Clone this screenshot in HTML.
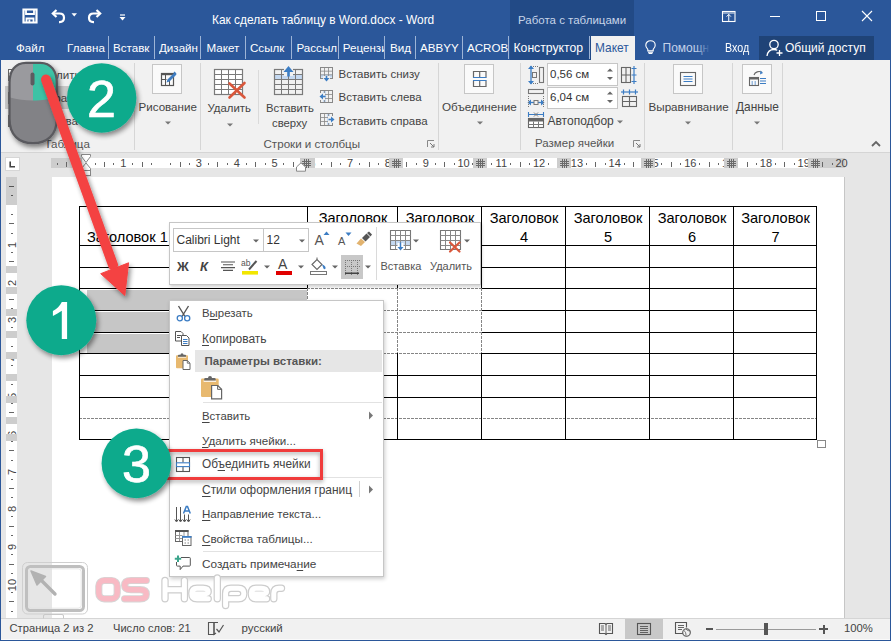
<!DOCTYPE html>
<html><head><meta charset="utf-8">
<style>
*{margin:0;padding:0;box-sizing:border-box}
html,body{width:891px;height:641px;overflow:hidden}
body{position:relative;background:#2B579A;font-family:"Liberation Sans",sans-serif;font-size:12px;color:#444}
.a{position:absolute}
.w{color:#fff}
.t{white-space:nowrap;line-height:1}
svg{position:absolute;overflow:visible}
</style></head><body>

<!-- ===== TITLE BAR ===== -->
<div class="a" style="left:510px;top:0;width:124px;height:60px;background:#224A86"></div>
<div class="a t w" style="left:212px;top:14.5px;font-size:11.9px">Как сделать таблицу в Word.docx - Word</div>
<div class="a t" style="left:518px;top:15px;font-size:11.5px;color:#C6D4E8">Работа с таблицами</div>

<!-- QAT -->
<svg style="left:22px;top:8px" width="16" height="16" viewBox="0 0 16 16"><path d="M1.5 1.5h13v13h-13z" fill="none" stroke="#fff" stroke-width="2.2"/><path d="M4 1.5v4.5h8V1.5" fill="none" stroke="#fff" stroke-width="1.8"/><path d="M4.5 14.5v-4h7v4" fill="none" stroke="#fff" stroke-width="1.8"/><path d="M6.5 11.5h1.8v3h-1.8z" fill="#fff"/></svg>
<svg style="left:51px;top:8px" width="16" height="16" viewBox="0 0 16 16"><path d="M5.5 2L1.8 5.5L5.5 9" fill="none" stroke="#fff" stroke-width="2.2" stroke-linejoin="miter"/><path d="M2 5.5h6.5c2.8 0 4.5 1.8 4.5 4.3s-1.8 4.3-4.5 4.3H8" fill="none" stroke="#fff" stroke-width="2.2"/></svg>
<svg style="left:71px;top:13px" width="7" height="4" viewBox="0 0 7 4"><path d="M0.5 0.3h5.5L3.25 3.5z" fill="#fff"/></svg>
<svg style="left:86px;top:8px" width="16" height="16" viewBox="0 0 16 16"><path d="M10.5 2L14.2 5.5L10.5 9" fill="none" stroke="#fff" stroke-width="2.2"/><path d="M14 5.5H7.5C4.7 5.5 3 7.3 3 9.8s1.8 4.3 4.5 4.3H8" fill="none" stroke="#fff" stroke-width="2.2"/></svg>
<svg style="left:119px;top:14px" width="7" height="7" viewBox="0 0 7 7"><path d="M1 1h5" stroke="#fff" stroke-width="1.2"/><path d="M0.5 3h6L3.5 6.5z" fill="#fff"/></svg>
<!-- window controls -->
<svg style="left:722px;top:11px" width="14" height="11" viewBox="0 0 14 11"><rect x="0.5" y="0.5" width="12.5" height="10" fill="none" stroke="#fff" stroke-width="1.1"/><path d="M1 2h11.5" stroke="#fff" stroke-width="0.9"/><path d="M6.75 10V3.2M4.6 5.6L6.75 3.4L8.9 5.6" fill="none" stroke="#fff" stroke-width="1"/></svg>
<div class="a" style="left:770px;top:16px;width:10px;height:1px;background:#fff"></div>
<div class="a" style="left:816px;top:11px;width:10px;height:10px;border:1px solid #fff"></div>
<svg style="left:862px;top:11px" width="10" height="10" viewBox="0 0 10 10"><path d="M0 0L10 10M10 0L0 10" stroke="#fff" stroke-width="1.1"/></svg>
<!-- ===== TAB ROW ===== -->
<!-- tabs -->
<div class="a t w" style="left:16px;top:42px;font-size:11.6px">Файл</div>
<div class="a" style="left:64px;top:36px;width:446px;height:23px;overflow:hidden">
<div class="a t w" style="left:3.0px;top:6px;width:40.5px;overflow:hidden;font-size:11.6px">Главна</div>
<div class="a" style="left:44px;top:0;width:1px;height:23px;background:#9DB4D6"></div>
<div class="a t w" style="left:49.0px;top:6px;width:40.6px;overflow:hidden;font-size:11.6px">Вставк</div>
<div class="a" style="left:90px;top:0;width:1px;height:23px;background:#9DB4D6"></div>
<div class="a t w" style="left:95.0px;top:6px;width:40.7px;overflow:hidden;font-size:11.6px">Дизайн</div>
<div class="a" style="left:136px;top:0;width:1px;height:23px;background:#9DB4D6"></div>
<div class="a t w" style="left:142.5px;top:6px;width:38.2px;overflow:hidden;font-size:11.6px">Макет</div>
<div class="a" style="left:181px;top:0;width:1px;height:23px;background:#9DB4D6"></div>
<div class="a t w" style="left:186.0px;top:6px;width:40.9px;overflow:hidden;font-size:11.6px">Ссылк</div>
<div class="a" style="left:227px;top:0;width:1px;height:23px;background:#9DB4D6"></div>
<div class="a t w" style="left:232.5px;top:6px;width:40.5px;overflow:hidden;font-size:11.6px">Рассылки</div>
<div class="a" style="left:274px;top:0;width:1px;height:23px;background:#9DB4D6"></div>
<div class="a t w" style="left:278.8px;top:6px;width:40.8px;overflow:hidden;font-size:11.6px">Рецензирование</div>
<div class="a" style="left:320px;top:0;width:1px;height:23px;background:#9DB4D6"></div>
<div class="a t w" style="left:326.0px;top:6px;width:24.4px;overflow:hidden;font-size:11.6px">Вид</div>
<div class="a" style="left:351px;top:0;width:1px;height:23px;background:#9DB4D6"></div>
<div class="a t w" style="left:356.0px;top:6px;width:41.5px;overflow:hidden;font-size:11.6px">ABBYY FineReader</div>
<div class="a" style="left:398px;top:0;width:1px;height:23px;background:#9DB4D6"></div>
<div class="a t w" style="left:403.0px;top:6px;width:40.7px;overflow:hidden;font-size:11.6px">ACROBAT</div>
<div class="a" style="left:444px;top:0;width:1px;height:23px;background:#9DB4D6"></div>
</div>
<div class="a t w" style="left:513.5px;top:42px;font-size:12.2px">Конструктор</div>
<div class="a" style="left:591px;top:36px;width:44px;height:24px;background:#F1F1F1"></div><div class="a" style="left:589px;top:36px;width:1px;height:23px;background:#9DB4D6"></div>
<div class="a t" style="left:595px;top:43px;font-size:11.9px;color:#2B579A">Макет</div>
<svg style="left:645px;top:40px" width="11" height="14" viewBox="0 0 11 14"><path d="M5.5 0.7C2.8 0.7 0.8 2.7 0.8 5.2c0 2 1.3 3 2 4.1v1.6h5.4V9.3c0.7-1.1 2-2.1 2-4.1C10.2 2.7 8.2 0.7 5.5 0.7z" fill="none" stroke="#fff" stroke-width="1.1"/><path d="M3 12.3h5M3.6 13.5h3.8" stroke="#fff" stroke-width="1"/></svg>
<div class="a" style="left:662.5px;top:36px;width:46px;height:23px;overflow:hidden"><div class="a t" style="left:0;top:6px;font-size:12px;color:#C5D3EA">Помощник</div></div>
<div class="a" style="left:696px;top:36px;width:14px;height:23px;background:linear-gradient(90deg,rgba(43,87,154,0),#2B579A)"></div>
<div class="a t w" style="left:724.5px;top:42px;font-size:12px;transform:scaleX(0.89);transform-origin:0 0">Вход</div>
<div class="a" style="left:759px;top:36px;width:115px;height:24px;background:#1F4377"></div>
<svg style="left:765.5px;top:39px" width="18" height="18" viewBox="0 0 18 18"><circle cx="8" cy="5.5" r="4.2" fill="none" stroke="#fff" stroke-width="1.3"/><path d="M1 17c0.5-4 3.2-6.5 7-6.5c1.3 0 2.4 0.3 3.3 0.8" fill="none" stroke="#fff" stroke-width="1.3"/><path d="M13.5 11v6M10.5 14h6" stroke="#fff" stroke-width="1.3"/></svg>
<div class="a t w" style="left:785px;top:42px;font-size:12px">Общий доступ</div>


<!-- ===== RIBBON ===== -->
<div class="a" style="left:1px;top:60px;width:889px;height:93px;background:#F1F1F1;border-bottom:1px solid #D5D5D5"></div>

<!-- ribbon content -->
<div class="a" style="left:5px;top:86px;width:122px;height:23px;background:#C8C8C8"></div>
<svg style="left:7px;top:68px" width="14" height="14" viewBox="0 0 14 14"><rect x="1.5" y="1.5" width="11" height="11" fill="#fff" stroke="#666" stroke-width="1"/><path d="M5.17 1.5V12.5" stroke="#666" stroke-width="0.80"/><path d="M8.83 1.5V12.5" stroke="#666" stroke-width="0.80"/><path d="M1.5 5.17H12.5" stroke="#666" stroke-width="0.80"/><path d="M1.5 8.83H12.5" stroke="#666" stroke-width="0.80"/></svg>
<svg style="left:7px;top:91px" width="14" height="14" viewBox="0 0 14 14"><rect x="1.5" y="1.5" width="11" height="11" fill="#fff" stroke="#666" stroke-width="1"/><path d="M5.17 1.5V12.5" stroke="#666" stroke-width="0.80"/><path d="M8.83 1.5V12.5" stroke="#666" stroke-width="0.80"/><path d="M1.5 5.17H12.5" stroke="#666" stroke-width="0.80"/><path d="M1.5 8.83H12.5" stroke="#666" stroke-width="0.80"/></svg>
<svg style="left:7px;top:114px" width="14" height="14" viewBox="0 0 14 14"><rect x="1.5" y="1.5" width="11" height="11" fill="#fff" stroke="#666" stroke-width="1"/><path d="M5.17 1.5V12.5" stroke="#666" stroke-width="0.80"/><path d="M8.83 1.5V12.5" stroke="#666" stroke-width="0.80"/><path d="M1.5 5.17H12.5" stroke="#666" stroke-width="0.80"/><path d="M1.5 8.83H12.5" stroke="#666" stroke-width="0.80"/></svg>
<div class="a t" style="left:27px;top:69px;font-size:11.6px;color:#444">Выделить</div>
<div class="a t" style="left:27px;top:92px;font-size:11.6px;color:#444">Отобразить сетку</div>
<div class="a t" style="left:27px;top:115px;font-size:11.6px;color:#444">Свойства</div>
<div class="a t" style="left:44.5px;top:138px;font-size:11.6px;color:#555">Таблица</div>
<div class="a" style="left:134px;top:63px;width:1px;height:87px;background:#D6D6D6"></div>
<div class="a" style="left:200px;top:63px;width:1px;height:87px;background:#D6D6D6"></div>
<div class="a" style="left:438px;top:63px;width:1px;height:87px;background:#D6D6D6"></div>
<div class="a" style="left:520px;top:63px;width:1px;height:87px;background:#D6D6D6"></div>
<div class="a" style="left:644px;top:63px;width:1px;height:87px;background:#D6D6D6"></div>
<div class="a" style="left:732px;top:63px;width:1px;height:87px;background:#D6D6D6"></div>
<div class="a" style="left:782px;top:63px;width:1px;height:87px;background:#D6D6D6"></div>
<div class="a" style="left:258px;top:70px;width:1px;height:54px;background:#DADADA"></div>
<div class="a" style="left:152px;top:64px;width:30px;height:30px;background:#FAFAFA;border:1px solid #C6C6C6"></div>
<svg style="left:160px;top:70px" width="18" height="18" viewBox="0 0 18 18"><rect x="1.5" y="3.5" width="12" height="12" fill="none" stroke="#555" stroke-width="1.2"/><rect x="1" y="3" width="13" height="2.2" fill="#555"/><path d="M1.5 9.5h5M5.5 5v10.5M9.5 11v4.5" stroke="#555" stroke-width="1"/><path d="M6.5 12.5l1-3l7-7l2 2l-7 7z" fill="#3F7CC0"/><path d="M13.5 2.5l1-1l2 2l-1 1z" fill="#3F7CC0"/></svg>
<div class="a t" style="left:138.5px;top:101px;font-size:11.6px;color:#444">Рисование</div>
<svg style="left:164.5px;top:121.0px" width="6" height="4" viewBox="0 0 6 4"><path d="M0 0.5h6L3 3.5z" fill="#777"/></svg>
<svg style="left:212px;top:67px" width="36" height="34" viewBox="0 0 36 34"><rect x="2.5" y="2.5" width="28" height="25" fill="#fff"/><rect x="2.5" y="2.5" width="28" height="25" fill="none" stroke="#7A7A7A" stroke-width="1.2"/><path d="M9.5 2.5V27.5M16.5 2.5V27.5M23.5 2.5V27.5M2.5 7.5H30.5M2.5 12.5H30.5M2.5 17.5H30.5M2.5 22.5H30.5" stroke="#7A7A7A" stroke-width="1"/><path d="M17.5 16.5L32.5 30.5M32.5 16L17.5 30.5" stroke="#D9573B" stroke-width="2.6" stroke-linecap="round"/></svg>
<div class="a t" style="left:207.5px;top:103px;font-size:11.4px;color:#444">Удалить</div>
<svg style="left:226.5px;top:123.0px" width="6" height="4" viewBox="0 0 6 4"><path d="M0 0.5h6L3 3.5z" fill="#777"/></svg>
<svg style="left:272px;top:64px" width="34" height="34" viewBox="0 0 34 34"><rect x="2.5" y="10.5" width="28" height="5" fill="#C5D9F1"/><rect x="2.5" y="5.5" width="28" height="25" fill="none" stroke="#7A7A7A" stroke-width="1.2"/><path d="M9.5 5.5V30.5M16.5 5.5V30.5M23.5 5.5V30.5M2.5 10.5H30.5M2.5 15.5H30.5M2.5 20.5H30.5M2.5 25.5H30.5" stroke="#7A7A7A" stroke-width="1"/><rect x="12" y="3" width="9" height="9" fill="#F1F1F1"/><path d="M16.5 12.5V4.5" stroke="#3C7DC4" stroke-width="2.6"/><path d="M11.5 8L16.5 2L21.5 8z" fill="#3C7DC4"/></svg>
<div class="a t" style="left:266px;top:103px;font-size:11.3px;color:#444">Вставить</div>
<div class="a t" style="left:272px;top:118px;font-size:11.3px;color:#444">сверху</div>
<svg style="left:319px;top:66px" width="16" height="16" viewBox="0 0 16 16"><rect x="1.5" y="8.5" width="12" height="3" fill="#C5D9F1"/><rect x="1.5" y="1.5" width="12" height="11" fill="none" stroke="#888" stroke-width="1"/><path d="M5.50 1.5V12.5" stroke="#888" stroke-width="0.80"/><path d="M9.50 1.5V12.5" stroke="#888" stroke-width="0.80"/><path d="M1.5 5.17H13.5" stroke="#888" stroke-width="0.80"/><path d="M1.5 8.83H13.5" stroke="#888" stroke-width="0.80"/><rect x="4" y="10" width="7" height="6" fill="#F1F1F1"/><path d="M7.5 10v4" stroke="#3C7DC4" stroke-width="1.6"/><path d="M4.5 12l3 3.5l3-3.5z" fill="#3C7DC4"/></svg>
<svg style="left:319px;top:89px" width="16" height="16" viewBox="0 0 16 16"><rect x="4" y="1.5" width="3" height="12" fill="#C5D9F1"/><rect x="1.5" y="1.5" width="12" height="12" fill="none" stroke="#888" stroke-width="1"/><path d="M5.50 1.5V13.5" stroke="#888" stroke-width="0.80"/><path d="M9.50 1.5V13.5" stroke="#888" stroke-width="0.80"/><path d="M1.5 5.50H13.5" stroke="#888" stroke-width="0.80"/><path d="M1.5 9.50H13.5" stroke="#888" stroke-width="0.80"/><rect x="0" y="4" width="6" height="7" fill="#F1F1F1"/><path d="M2.5 7.5h4" stroke="#3C7DC4" stroke-width="1.6"/><path d="M4 4.5l-3.5 3l3.5 3z" fill="#3C7DC4"/></svg>
<svg style="left:319px;top:112px" width="16" height="16" viewBox="0 0 16 16"><rect x="8" y="1.5" width="3" height="12" fill="#C5D9F1"/><rect x="1.5" y="1.5" width="12" height="12" fill="none" stroke="#888" stroke-width="1"/><path d="M5.50 1.5V13.5" stroke="#888" stroke-width="0.80"/><path d="M9.50 1.5V13.5" stroke="#888" stroke-width="0.80"/><path d="M1.5 5.50H13.5" stroke="#888" stroke-width="0.80"/><path d="M1.5 9.50H13.5" stroke="#888" stroke-width="0.80"/><rect x="9" y="4" width="7" height="7" fill="#F1F1F1"/><path d="M9.5 7.5h4" stroke="#3C7DC4" stroke-width="1.6"/><path d="M12 4.5l3.5 3l-3.5 3z" fill="#3C7DC4"/></svg>
<div class="a t" style="left:338.5px;top:69.3px;font-size:11.5px;color:#444">Вставить снизу</div>
<div class="a t" style="left:338.5px;top:92.3px;font-size:11.5px;color:#444">Вставить слева</div>
<div class="a t" style="left:338.5px;top:116.2px;font-size:11.5px;color:#444">Вставить справа</div>
<div class="a t" style="left:263.5px;top:138px;font-size:11.6px;color:#555">Строки и столбцы</div>
<svg style="left:427px;top:140px" width="8" height="8" viewBox="0 0 8 8"><path d="M0.5 7V0.5H7" fill="none" stroke="#888" stroke-width="1"/><path d="M3 3L7 7M7 4v3h-3" fill="none" stroke="#777" stroke-width="1"/></svg>
<div class="a" style="left:464px;top:64px;width:30px;height:30px;background:#FAFAFA;border:1px solid #C6C6C6"></div>
<svg style="left:470px;top:69px" width="18" height="20" viewBox="0 0 18 20"><path d="M3.5 8.5v-6h12.5v6M3.5 11.5v6h12.5v-6M9.7 2.5v6M9.7 11.5v6" fill="none" stroke="#666" stroke-width="1.2"/><path d="M3 8.5h13.5M3 11.5h13.5" stroke="#3C7DC4" stroke-width="1.2"/></svg>
<div class="a t" style="left:442px;top:101px;font-size:11.7px;color:#444">Объединение</div>
<svg style="left:476.5px;top:120.5px" width="6" height="4" viewBox="0 0 6 4"><path d="M0 0.5h6L3 3.5z" fill="#777"/></svg>
<div class="a" style="left:547px;top:63px;width:71px;height:23px;background:#fff;border:1px solid #C6C6C6"></div>
<div class="a" style="left:547px;top:87px;width:71px;height:22px;background:#fff;border:1px solid #C6C6C6"></div>
<div class="a t" style="left:550px;top:68.5px;font-size:11.5px;color:#333">0,56 см</div>
<div class="a t" style="left:550px;top:91.5px;font-size:11.5px;color:#333">6,04 см</div>
<svg style="left:606px;top:64px" width="8" height="20" viewBox="0 0 8 20"><path d="M1 7.5h6L4 4.5z" fill="#666"/><path d="M1 13h6L4 16z" fill="#666"/></svg>
<svg style="left:606px;top:87px" width="8" height="20" viewBox="0 0 8 20"><path d="M1 7.5h6L4 4.5z" fill="#666"/><path d="M1 13h6L4 16z" fill="#666"/></svg>
<svg style="left:527px;top:65px" width="18" height="20" viewBox="0 0 18 20"><path d="M4 1v18" stroke="#3C7DC4" stroke-width="1.3"/><path d="M1 4L4 0.5L7 4zM1 16L4 19.5L7 16z" fill="#3C7DC4"/><rect x="5.5" y="7.5" width="4" height="5" fill="none" stroke="#777" stroke-width="1"/><path d="M6 1.5h5M6 18.5h5" stroke="#777" stroke-width="1" stroke-dasharray="1 1"/><rect x="12.5" y="2.5" width="4" height="15" fill="none" stroke="#777" stroke-width="1.1"/></svg>
<svg style="left:527px;top:88px" width="18" height="20" viewBox="0 0 18 20"><rect x="1.5" y="1.5" width="15" height="4" fill="none" stroke="#777" stroke-width="1.1"/><path d="M1 14.5h16" stroke="#3C7DC4" stroke-width="1.3"/><path d="M4 11.5L0.5 14.5L4 17.5zM14 11.5L17.5 14.5L14 17.5z" fill="#3C7DC4"/><rect x="7" y="12.5" width="4" height="4" fill="#F1F1F1" stroke="#777" stroke-width="1"/><path d="M1.5 8v11M16.5 8v11" stroke="#777" stroke-width="1" stroke-dasharray="1 1"/></svg>
<svg style="left:527px;top:111px" width="18" height="18" viewBox="0 0 18 18"><path d="M1.5 1v5M16.5 1v5M1.5 3.5h15" stroke="#3C7DC4" stroke-width="1.1"/><path d="M7 1.5l4 4M11 1.5l-4 4" stroke="#777" stroke-width="1"/><rect x="1.5" y="7.5" width="15" height="9" fill="#fff" stroke="#666" stroke-width="1.1"/><rect x="1.5" y="7.5" width="15" height="3" fill="#666"/><path d="M1.5 13.5h15M6.5 10.5v6M11.5 10.5v6" stroke="#777" stroke-width="1"/></svg>
<div class="a t" style="left:547.5px;top:115px;font-size:12px;color:#444">Автоподбор</div>
<svg style="left:617px;top:119.5px" width="6" height="4" viewBox="0 0 6 4"><path d="M0 0.5h6L3 3.5z" fill="#777"/></svg>
<svg style="left:620px;top:65px" width="18" height="20" viewBox="0 0 18 20"><rect x="1.5" y="2.5" width="9" height="15" fill="none" stroke="#666" stroke-width="1.1"/><path d="M1.5 10h9M6 2.5v15" stroke="#666" stroke-width="1.1"/><path d="M14 1v18" stroke="#3C7DC4" stroke-width="1.2"/><path d="M11.5 3.5h5M11.5 10h5M11.5 16.5h5" stroke="#3C7DC4" stroke-width="1.2"/></svg>
<svg style="left:620px;top:88px" width="18" height="20" viewBox="0 0 18 20"><rect x="2.5" y="8.5" width="14" height="10" fill="none" stroke="#666" stroke-width="1.1"/><path d="M2.5 13.5h14M9.5 8.5v10" stroke="#666" stroke-width="1.1"/><path d="M1 4h17" stroke="#3C7DC4" stroke-width="1.2"/><path d="M3.5 1.5v5M9.5 1.5v5M15.5 1.5v5" stroke="#3C7DC4" stroke-width="1.2"/></svg>
<div class="a t" style="left:535px;top:138px;font-size:11.5px;color:#555">Размер ячейки</div>
<svg style="left:633px;top:140px" width="8" height="8" viewBox="0 0 8 8"><path d="M0.5 7V0.5H7" fill="none" stroke="#888" stroke-width="1"/><path d="M3 3L7 7M7 4v3h-3" fill="none" stroke="#777" stroke-width="1"/></svg>
<div class="a" style="left:673px;top:64px;width:30px;height:30px;background:#FAFAFA;border:1px solid #C6C6C6"></div>
<svg style="left:679px;top:70px" width="18" height="18" viewBox="0 0 18 18"><rect x="1.5" y="2.5" width="15" height="13" fill="none" stroke="#666" stroke-width="1.1"/><path d="M4.5 6.5h9M4.5 9h9M4.5 11.5h9" stroke="#3C7DC4" stroke-width="1.1"/></svg>
<div class="a t" style="left:648.5px;top:101px;font-size:11.65px;color:#444">Выравнивание</div>
<svg style="left:685px;top:120.5px" width="6" height="4" viewBox="0 0 6 4"><path d="M0 0.5h6L3 3.5z" fill="#777"/></svg>
<div class="a" style="left:742px;top:64px;width:30px;height:30px;background:#FAFAFA;border:1px solid #C6C6C6"></div>
<svg style="left:748px;top:69px" width="20" height="20" viewBox="0 0 20 20"><rect x="1.5" y="8.5" width="9" height="8" fill="none" stroke="#666" stroke-width="1.1"/><rect x="1.5" y="8.5" width="9" height="2" fill="#666"/><path d="M3.5 13h1.5M6.5 13h1.5M3.5 15h1.5M6.5 15h1.5" stroke="#3C7DC4" stroke-width="1"/><path d="M12 9.5h6M12 12h6M12 14.5h6" stroke="#3C7DC4" stroke-width="1.1"/><path d="M6 6c1-3 5-4.5 8-2.5" fill="none" stroke="#666" stroke-width="1.1"/><path d="M12.5 1.5l2.5 2.5l-3 1.5z" fill="#3C7DC4"/></svg>
<div class="a t" style="left:736px;top:102px;font-size:11.9px;color:#444">Данные</div>
<svg style="left:754px;top:120.5px" width="6" height="4" viewBox="0 0 6 4"><path d="M0 0.5h6L3 3.5z" fill="#777"/></svg>
<svg style="left:871px;top:140px" width="10" height="7" viewBox="0 0 10 7"><path d="M1 6L5 2L9 6" fill="none" stroke="#666" stroke-width="1.8"/></svg>
<!-- ===== DOC AREA ===== -->
<div class="a" style="left:1px;top:153px;width:889px;height:465px;background:#E6E6E6"></div>
<!-- page -->
<div class="a" style="left:52px;top:177px;width:793px;height:441px;background:#fff;border-right:1px solid #C6C6C6"></div>

<!-- doc content -->
<div class="a" style="left:4.5px;top:156.5px;width:15px;height:14px;background:#fff;border:1.5px solid #D6D6D6"></div>
<svg style="left:9px;top:161px" width="7" height="7" viewBox="0 0 7 7"><path d="M1.2 0.5V5.8H6" fill="none" stroke="#444" stroke-width="1.6"/></svg>
<div class="a" style="left:51px;top:158px;width:794px;height:10px;background:#fff"></div>
<div class="a" style="left:51px;top:158px;width:31px;height:10px;background:#CDCDCD"></div>
<div class="a" style="left:809px;top:158px;width:36px;height:10px;background:#CDCDCD"></div>
<div class="a" style="left:56.7px;top:162.5px;width:1px;height:2px;background:#666"></div>
<div class="a" style="left:66.1px;top:162px;width:1px;height:5px;background:#666"></div>
<div class="a" style="left:75.5px;top:162.5px;width:1px;height:2px;background:#666"></div>
<div class="a" style="left:94.5px;top:162.5px;width:1px;height:2px;background:#666"></div>
<div class="a" style="left:103.9px;top:162px;width:1px;height:5px;background:#666"></div>
<div class="a" style="left:113.3px;top:162.5px;width:1px;height:2px;background:#666"></div>
<div class="a" style="left:132.2px;top:162.5px;width:1px;height:2px;background:#666"></div>
<div class="a" style="left:141.7px;top:162px;width:1px;height:5px;background:#666"></div>
<div class="a" style="left:151.1px;top:162.5px;width:1px;height:2px;background:#666"></div>
<div class="a" style="left:170.1px;top:162.5px;width:1px;height:2px;background:#666"></div>
<div class="a" style="left:179.5px;top:162px;width:1px;height:5px;background:#666"></div>
<div class="a" style="left:188.9px;top:162.5px;width:1px;height:2px;background:#666"></div>
<div class="a" style="left:207.8px;top:162.5px;width:1px;height:2px;background:#666"></div>
<div class="a" style="left:217.3px;top:162px;width:1px;height:5px;background:#666"></div>
<div class="a" style="left:226.8px;top:162.5px;width:1px;height:2px;background:#666"></div>
<div class="a" style="left:245.6px;top:162.5px;width:1px;height:2px;background:#666"></div>
<div class="a" style="left:255.1px;top:162px;width:1px;height:5px;background:#666"></div>
<div class="a" style="left:264.5px;top:162.5px;width:1px;height:2px;background:#666"></div>
<div class="a" style="left:283.4px;top:162.5px;width:1px;height:2px;background:#666"></div>
<div class="a" style="left:292.9px;top:162px;width:1px;height:5px;background:#666"></div>
<div class="a" style="left:302.4px;top:162.5px;width:1px;height:2px;background:#666"></div>
<div class="a" style="left:321.2px;top:162.5px;width:1px;height:2px;background:#666"></div>
<div class="a" style="left:330.7px;top:162px;width:1px;height:5px;background:#666"></div>
<div class="a" style="left:340.1px;top:162.5px;width:1px;height:2px;background:#666"></div>
<div class="a" style="left:359.0px;top:162.5px;width:1px;height:2px;background:#666"></div>
<div class="a" style="left:368.5px;top:162px;width:1px;height:5px;background:#666"></div>
<div class="a" style="left:377.9px;top:162.5px;width:1px;height:2px;background:#666"></div>
<div class="a" style="left:396.8px;top:162.5px;width:1px;height:2px;background:#666"></div>
<div class="a" style="left:406.3px;top:162px;width:1px;height:5px;background:#666"></div>
<div class="a" style="left:415.8px;top:162.5px;width:1px;height:2px;background:#666"></div>
<div class="a" style="left:434.6px;top:162.5px;width:1px;height:2px;background:#666"></div>
<div class="a" style="left:444.1px;top:162px;width:1px;height:5px;background:#666"></div>
<div class="a" style="left:453.5px;top:162.5px;width:1px;height:2px;background:#666"></div>
<div class="a" style="left:472.4px;top:162.5px;width:1px;height:2px;background:#666"></div>
<div class="a" style="left:481.9px;top:162px;width:1px;height:5px;background:#666"></div>
<div class="a" style="left:491.3px;top:162.5px;width:1px;height:2px;background:#666"></div>
<div class="a" style="left:510.2px;top:162.5px;width:1px;height:2px;background:#666"></div>
<div class="a" style="left:519.7px;top:162px;width:1px;height:5px;background:#666"></div>
<div class="a" style="left:529.1px;top:162.5px;width:1px;height:2px;background:#666"></div>
<div class="a" style="left:548.0px;top:162.5px;width:1px;height:2px;background:#666"></div>
<div class="a" style="left:557.5px;top:162px;width:1px;height:5px;background:#666"></div>
<div class="a" style="left:567.0px;top:162.5px;width:1px;height:2px;background:#666"></div>
<div class="a" style="left:585.8px;top:162.5px;width:1px;height:2px;background:#666"></div>
<div class="a" style="left:595.3px;top:162px;width:1px;height:5px;background:#666"></div>
<div class="a" style="left:604.8px;top:162.5px;width:1px;height:2px;background:#666"></div>
<div class="a" style="left:623.6px;top:162.5px;width:1px;height:2px;background:#666"></div>
<div class="a" style="left:633.1px;top:162px;width:1px;height:5px;background:#666"></div>
<div class="a" style="left:642.5px;top:162.5px;width:1px;height:2px;background:#666"></div>
<div class="a" style="left:661.4px;top:162.5px;width:1px;height:2px;background:#666"></div>
<div class="a" style="left:670.9px;top:162px;width:1px;height:5px;background:#666"></div>
<div class="a" style="left:680.3px;top:162.5px;width:1px;height:2px;background:#666"></div>
<div class="a" style="left:699.2px;top:162.5px;width:1px;height:2px;background:#666"></div>
<div class="a" style="left:708.7px;top:162px;width:1px;height:5px;background:#666"></div>
<div class="a" style="left:718.1px;top:162.5px;width:1px;height:2px;background:#666"></div>
<div class="a" style="left:737.0px;top:162.5px;width:1px;height:2px;background:#666"></div>
<div class="a" style="left:746.5px;top:162px;width:1px;height:5px;background:#666"></div>
<div class="a" style="left:755.9px;top:162.5px;width:1px;height:2px;background:#666"></div>
<div class="a" style="left:774.8px;top:162.5px;width:1px;height:2px;background:#666"></div>
<div class="a" style="left:784.3px;top:162px;width:1px;height:5px;background:#666"></div>
<div class="a" style="left:793.8px;top:162.5px;width:1px;height:2px;background:#666"></div>
<div class="a" style="left:812.6px;top:162.5px;width:1px;height:2px;background:#666"></div>
<div class="a" style="left:822.1px;top:162px;width:1px;height:5px;background:#666"></div>
<div class="a" style="left:831.5px;top:162.5px;width:1px;height:2px;background:#666"></div>
<div class="a t" style="left:108.3px;top:158px;width:30px;text-align:center;font-size:11px;line-height:10px;color:#444">1</div>
<div class="a t" style="left:183.9px;top:158px;width:30px;text-align:center;font-size:11px;line-height:10px;color:#444">3</div>
<div class="a t" style="left:221.7px;top:158px;width:30px;text-align:center;font-size:11px;line-height:10px;color:#444">4</div>
<div class="a t" style="left:259.5px;top:158px;width:30px;text-align:center;font-size:11px;line-height:10px;color:#444">5</div>
<div class="a t" style="left:297.3px;top:158px;width:30px;text-align:center;font-size:11px;line-height:10px;color:#444">6</div>
<div class="a t" style="left:335.1px;top:158px;width:30px;text-align:center;font-size:11px;line-height:10px;color:#444">7</div>
<div class="a t" style="left:372.9px;top:158px;width:30px;text-align:center;font-size:11px;line-height:10px;color:#444">8</div>
<div class="a t" style="left:410.7px;top:158px;width:30px;text-align:center;font-size:11px;line-height:10px;color:#444">9</div>
<div class="a t" style="left:448.5px;top:158px;width:30px;text-align:center;font-size:11px;line-height:10px;color:#444">10</div>
<div class="a t" style="left:486.3px;top:158px;width:30px;text-align:center;font-size:11px;line-height:10px;color:#444">11</div>
<div class="a t" style="left:524.1px;top:158px;width:30px;text-align:center;font-size:11px;line-height:10px;color:#444">12</div>
<div class="a t" style="left:561.9px;top:158px;width:30px;text-align:center;font-size:11px;line-height:10px;color:#444">13</div>
<div class="a t" style="left:599.7px;top:158px;width:30px;text-align:center;font-size:11px;line-height:10px;color:#444">14</div>
<div class="a t" style="left:637.5px;top:158px;width:30px;text-align:center;font-size:11px;line-height:10px;color:#444">15</div>
<div class="a t" style="left:675.3px;top:158px;width:30px;text-align:center;font-size:11px;line-height:10px;color:#444">16</div>
<div class="a t" style="left:713.1px;top:158px;width:30px;text-align:center;font-size:11px;line-height:10px;color:#444">17</div>
<div class="a t" style="left:750.9px;top:158px;width:30px;text-align:center;font-size:11px;line-height:10px;color:#444">18</div>
<div class="a t" style="left:788.7px;top:158px;width:30px;text-align:center;font-size:11px;line-height:10px;color:#444">19</div>
<div class="a t" style="left:826.5px;top:158px;width:30px;text-align:center;font-size:11px;line-height:10px;color:#444">20</div>
<div class="a" style="left:300px;top:158px;width:15px;height:10px;background:#CDCDCD"></div>
<div class="a" style="left:389.0px;top:158px;width:14px;height:10px;background:#CDCDCD"></div>
<div class="a" style="left:473.0px;top:158px;width:14px;height:10px;background:#CDCDCD"></div>
<div class="a" style="left:557.0px;top:158px;width:14px;height:10px;background:#CDCDCD"></div>
<div class="a" style="left:641.0px;top:158px;width:14px;height:10px;background:#CDCDCD"></div>
<div class="a" style="left:723.5px;top:158px;width:14px;height:10px;background:#CDCDCD"></div>
<div class="a" style="left:808.0px;top:158px;width:14px;height:10px;background:#CDCDCD"></div>
<svg style="left:302px;top:159px" width="9" height="9" viewBox="0 0 9 9"><path d="M2.5 0v9M4.5 0v9M6.5 0v9M0 2.5h9M0 4.5h9M0 6.5h9" stroke="#6A6A6A" stroke-width="1"/></svg>
<svg style="left:392px;top:159px" width="9" height="9" viewBox="0 0 9 9"><path d="M2.5 0v9M4.5 0v9M6.5 0v9M0 2.5h9M0 4.5h9M0 6.5h9" stroke="#6A6A6A" stroke-width="1"/></svg>
<svg style="left:476px;top:159px" width="9" height="9" viewBox="0 0 9 9"><path d="M2.5 0v9M4.5 0v9M6.5 0v9M0 2.5h9M0 4.5h9M0 6.5h9" stroke="#6A6A6A" stroke-width="1"/></svg>
<svg style="left:560px;top:159px" width="9" height="9" viewBox="0 0 9 9"><path d="M2.5 0v9M4.5 0v9M6.5 0v9M0 2.5h9M0 4.5h9M0 6.5h9" stroke="#6A6A6A" stroke-width="1"/></svg>
<svg style="left:644px;top:159px" width="9" height="9" viewBox="0 0 9 9"><path d="M2.5 0v9M4.5 0v9M6.5 0v9M0 2.5h9M0 4.5h9M0 6.5h9" stroke="#6A6A6A" stroke-width="1"/></svg>
<svg style="left:727px;top:159px" width="9" height="9" viewBox="0 0 9 9"><path d="M2.5 0v9M4.5 0v9M6.5 0v9M0 2.5h9M0 4.5h9M0 6.5h9" stroke="#6A6A6A" stroke-width="1"/></svg>
<svg style="left:811px;top:159px" width="9" height="9" viewBox="0 0 9 9"><path d="M2.5 0v9M4.5 0v9M6.5 0v9M0 2.5h9M0 4.5h9M0 6.5h9" stroke="#6A6A6A" stroke-width="1"/></svg>
<svg style="left:80px;top:154px" width="12" height="22" viewBox="0 0 12 22"><path d="M1.5 0.5h9v2L6 8.5L1.5 2.5z" fill="#fff" stroke="#888" stroke-width="1"/><path d="M6 9L10.5 14.5v2h-9v-2z" fill="#fff" stroke="#888" stroke-width="1"/><rect x="1.5" y="16.5" width="9" height="5" fill="#fff" stroke="#888" stroke-width="1"/></svg>
<svg style="left:295px;top:162px" width="12" height="10" viewBox="0 0 12 10"><path d="M6 0.8L10.5 5v4.2h-9V5z" fill="#fff" stroke="#888" stroke-width="1"/></svg>
<div class="a" style="left:6px;top:177px;width:11px;height:441px;background:#fff"></div>
<div class="a" style="left:6px;top:177px;width:11px;height:28px;background:#CDCDCD"></div>
<div class="a" style="left:9px;top:185.5px;width:5px;height:1px;background:#555"></div>
<div class="a" style="left:10.5px;top:195px;width:2px;height:1px;background:#555"></div>
<div class="a" style="left:10.5px;top:213.9px;width:2px;height:1px;background:#666"></div>
<div class="a" style="left:9px;top:223.4px;width:5px;height:1px;background:#666"></div>
<div class="a" style="left:10.5px;top:232.8px;width:2px;height:1px;background:#666"></div>
<div class="a" style="left:10.5px;top:251.8px;width:2px;height:1px;background:#666"></div>
<div class="a" style="left:9px;top:261.2px;width:5px;height:1px;background:#666"></div>
<div class="a" style="left:10.5px;top:270.6px;width:2px;height:1px;background:#666"></div>
<div class="a" style="left:10.5px;top:289.6px;width:2px;height:1px;background:#666"></div>
<div class="a" style="left:9px;top:299.0px;width:5px;height:1px;background:#666"></div>
<div class="a" style="left:10.5px;top:308.4px;width:2px;height:1px;background:#666"></div>
<div class="a" style="left:10.5px;top:327.4px;width:2px;height:1px;background:#666"></div>
<div class="a" style="left:9px;top:336.8px;width:5px;height:1px;background:#666"></div>
<div class="a" style="left:10.5px;top:346.2px;width:2px;height:1px;background:#666"></div>
<div class="a" style="left:10.5px;top:365.1px;width:2px;height:1px;background:#666"></div>
<div class="a" style="left:9px;top:374.6px;width:5px;height:1px;background:#666"></div>
<div class="a" style="left:10.5px;top:384.0px;width:2px;height:1px;background:#666"></div>
<div class="a" style="left:10.5px;top:402.9px;width:2px;height:1px;background:#666"></div>
<div class="a" style="left:9px;top:412.4px;width:5px;height:1px;background:#666"></div>
<div class="a" style="left:10.5px;top:421.9px;width:2px;height:1px;background:#666"></div>
<div class="a" style="left:10.5px;top:440.8px;width:2px;height:1px;background:#666"></div>
<div class="a" style="left:9px;top:450.2px;width:5px;height:1px;background:#666"></div>
<div class="a" style="left:10.5px;top:459.6px;width:2px;height:1px;background:#666"></div>
<div class="a" style="left:10.5px;top:478.5px;width:2px;height:1px;background:#666"></div>
<div class="a" style="left:9px;top:488.0px;width:5px;height:1px;background:#666"></div>
<div class="a" style="left:10.5px;top:497.4px;width:2px;height:1px;background:#666"></div>
<div class="a" style="left:10.5px;top:516.3px;width:2px;height:1px;background:#666"></div>
<div class="a" style="left:9px;top:525.8px;width:5px;height:1px;background:#666"></div>
<div class="a" style="left:10.5px;top:535.2px;width:2px;height:1px;background:#666"></div>
<div class="a" style="left:10.5px;top:554.1px;width:2px;height:1px;background:#666"></div>
<div class="a" style="left:9px;top:563.6px;width:5px;height:1px;background:#666"></div>
<div class="a" style="left:10.5px;top:573.0px;width:2px;height:1px;background:#666"></div>
<div class="a" style="left:10.5px;top:592.0px;width:2px;height:1px;background:#666"></div>
<div class="a" style="left:9px;top:601.4px;width:5px;height:1px;background:#666"></div>
<div class="a" style="left:10.5px;top:610.8px;width:2px;height:1px;background:#666"></div>
<div class="a t" style="left:-3.5px;top:239.8px;width:30px;height:10px;text-align:center;font-size:11px;line-height:10px;color:#444;transform:rotate(-90deg)">1</div>
<div class="a t" style="left:-3.5px;top:277.6px;width:30px;height:10px;text-align:center;font-size:11px;line-height:10px;color:#444;transform:rotate(-90deg)">2</div>
<div class="a t" style="left:-3.5px;top:315.4px;width:30px;height:10px;text-align:center;font-size:11px;line-height:10px;color:#444;transform:rotate(-90deg)">3</div>
<div class="a t" style="left:-3.5px;top:353.2px;width:30px;height:10px;text-align:center;font-size:11px;line-height:10px;color:#444;transform:rotate(-90deg)">4</div>
<div class="a t" style="left:-3.5px;top:391.0px;width:30px;height:10px;text-align:center;font-size:11px;line-height:10px;color:#444;transform:rotate(-90deg)">5</div>
<div class="a t" style="left:-3.5px;top:428.8px;width:30px;height:10px;text-align:center;font-size:11px;line-height:10px;color:#444;transform:rotate(-90deg)">6</div>
<div class="a t" style="left:-3.5px;top:466.6px;width:30px;height:10px;text-align:center;font-size:11px;line-height:10px;color:#444;transform:rotate(-90deg)">7</div>
<div class="a t" style="left:-3.5px;top:504.4px;width:30px;height:10px;text-align:center;font-size:11px;line-height:10px;color:#444;transform:rotate(-90deg)">8</div>
<div class="a t" style="left:-3.5px;top:542.2px;width:30px;height:10px;text-align:center;font-size:11px;line-height:10px;color:#444;transform:rotate(-90deg)">9</div>
<div class="a t" style="left:-3.5px;top:580.0px;width:30px;height:10px;text-align:center;font-size:11px;line-height:10px;color:#444;transform:rotate(-90deg)">10</div>
<div class="a" style="left:6px;top:266px;width:11px;height:7px;background:#CDCDCD"></div>
<div class="a" style="left:6px;top:287px;width:11px;height:7px;background:#CDCDCD"></div>
<div class="a" style="left:6px;top:309px;width:11px;height:7px;background:#CDCDCD"></div>
<div class="a" style="left:6px;top:331px;width:11px;height:7px;background:#CDCDCD"></div>
<div class="a" style="left:6px;top:352px;width:11px;height:7px;background:#CDCDCD"></div>
<div class="a" style="left:6px;top:374px;width:11px;height:7px;background:#CDCDCD"></div>
<div class="a" style="left:6px;top:396px;width:11px;height:7px;background:#CDCDCD"></div>
<div class="a" style="left:6px;top:417px;width:11px;height:7px;background:#CDCDCD"></div>
<div class="a" style="left:6px;top:434px;width:11px;height:7px;background:#CDCDCD"></div>
<!-- table -->
<div class="a" style="left:87px;top:290px;width:220px;height:19.5px;background:#C6C6C6"></div>
<div class="a" style="left:87px;top:312px;width:220px;height:19.5px;background:#C6C6C6"></div>
<div class="a" style="left:87px;top:334px;width:220px;height:18.5px;background:#C6C6C6"></div>
<div class="a" style="left:79px;top:206px;width:738px;height:1px;background:#000"></div>
<div class="a" style="left:79px;top:245px;width:738px;height:1px;background:#000"></div>
<div class="a" style="left:79px;top:267px;width:738px;height:1px;background:#000"></div>
<div class="a" style="left:79px;top:288px;width:229px;height:1px;background:#000"></div>
<div class="a" style="left:307px;top:288px;width:175px;height:1px;background:repeating-linear-gradient(90deg,#858585 0 3px,transparent 3px 4px)"></div>
<div class="a" style="left:481px;top:288px;width:336px;height:1px;background:#000"></div>
<div class="a" style="left:79px;top:310px;width:229px;height:1px;background:#000"></div>
<div class="a" style="left:307px;top:310px;width:175px;height:1px;background:repeating-linear-gradient(90deg,#858585 0 3px,transparent 3px 4px)"></div>
<div class="a" style="left:481px;top:310px;width:336px;height:1px;background:#000"></div>
<div class="a" style="left:79px;top:332px;width:229px;height:1px;background:#000"></div>
<div class="a" style="left:307px;top:332px;width:175px;height:1px;background:repeating-linear-gradient(90deg,#858585 0 3px,transparent 3px 4px)"></div>
<div class="a" style="left:481px;top:332px;width:336px;height:1px;background:#000"></div>
<div class="a" style="left:79px;top:353px;width:229px;height:1px;background:#000"></div>
<div class="a" style="left:307px;top:353px;width:175px;height:1px;background:repeating-linear-gradient(90deg,#858585 0 3px,transparent 3px 4px)"></div>
<div class="a" style="left:481px;top:353px;width:336px;height:1px;background:#000"></div>
<div class="a" style="left:79px;top:375px;width:738px;height:1px;background:#000"></div>
<div class="a" style="left:79px;top:397px;width:738px;height:1px;background:#000"></div>
<div class="a" style="left:79px;top:418px;width:738px;height:1px;background:repeating-linear-gradient(90deg,#858585 0 3px,transparent 3px 4px)"></div>
<div class="a" style="left:79px;top:439px;width:738px;height:1px;background:#000"></div>
<div class="a" style="left:79px;top:206px;width:1px;height:234px;background:#000"></div>
<div class="a" style="left:307px;top:206px;width:1px;height:83px;background:#000"></div>
<div class="a" style="left:307px;top:288px;width:1px;height:66px;background:repeating-linear-gradient(180deg,#858585 0 3px,transparent 3px 4px)"></div>
<div class="a" style="left:307px;top:353px;width:1px;height:87px;background:#000"></div>
<div class="a" style="left:397px;top:206px;width:1px;height:83px;background:#000"></div>
<div class="a" style="left:397px;top:288px;width:1px;height:66px;background:repeating-linear-gradient(180deg,#858585 0 3px,transparent 3px 4px)"></div>
<div class="a" style="left:397px;top:353px;width:1px;height:87px;background:#000"></div>
<div class="a" style="left:481px;top:206px;width:1px;height:83px;background:#000"></div>
<div class="a" style="left:481px;top:288px;width:1px;height:66px;background:repeating-linear-gradient(180deg,#858585 0 3px,transparent 3px 4px)"></div>
<div class="a" style="left:481px;top:353px;width:1px;height:87px;background:#000"></div>
<div class="a" style="left:565px;top:206px;width:1px;height:234px;background:#000"></div>
<div class="a" style="left:649px;top:206px;width:1px;height:234px;background:#000"></div>
<div class="a" style="left:733px;top:206px;width:1px;height:234px;background:#000"></div>
<div class="a" style="left:816px;top:206px;width:1px;height:234px;background:#000"></div>
<div class="a" style="left:817px;top:440px;width:9px;height:8px;border:1px solid #888;background:#fff"></div>
<div class="a t" style="left:87px;top:230.2px;font-size:14.6px;color:#000">Заголовок 1</div>
<div class="a t" style="left:308px;top:208.5px;width:90px;text-align:center;font-size:14.6px;line-height:19px;color:#000">Заголовок<br>2</div>
<div class="a t" style="left:398px;top:208.5px;width:84px;text-align:center;font-size:14.6px;line-height:19px;color:#000">Заголовок<br>3</div>
<div class="a t" style="left:482px;top:208.5px;width:84px;text-align:center;font-size:14.6px;line-height:19px;color:#000">Заголовок<br>4</div>
<div class="a t" style="left:566px;top:208.5px;width:84px;text-align:center;font-size:14.6px;line-height:19px;color:#000">Заголовок<br>5</div>
<div class="a t" style="left:650px;top:208.5px;width:84px;text-align:center;font-size:14.6px;line-height:19px;color:#000">Заголовок<br>6</div>
<div class="a t" style="left:734px;top:208.5px;width:83px;text-align:center;font-size:14.6px;line-height:19px;color:#000">Заголовок<br>7</div>
<!-- mini toolbar -->
<div class="a" style="left:169px;top:222px;width:312px;height:62.5px;background:#fff;border:1px solid #C6C6C6;box-shadow:1px 2px 3px rgba(0,0,0,0.18)"></div>
<div class="a" style="left:173px;top:228px;width:91px;height:24px;border:1px solid #C6C6C6"></div>
<div class="a" style="left:263px;top:228px;width:46px;height:24px;border:1px solid #C6C6C6"></div>
<div class="a t" style="left:176.5px;top:233.5px;font-size:12px;color:#333">Calibri Light</div>
<svg style="left:252.5px;top:238.5px" width="6" height="4" viewBox="0 0 6 4"><path d="M0 0.5h6L3 3.5z" fill="#666"/></svg>
<div class="a t" style="left:266.5px;top:233.5px;font-size:12px;color:#333">12</div>
<svg style="left:298.5px;top:238.5px" width="6" height="4" viewBox="0 0 6 4"><path d="M0 0.5h6L3 3.5z" fill="#666"/></svg>
<div class="a t" style="left:314.5px;top:232.5px;font-size:14px;color:#555">A</div>
<svg style="left:323px;top:231px" width="7" height="5" viewBox="0 0 7 5"><path d="M0.5 4L3.5 0.5L6.5 4z" fill="#3C7DC4"/></svg>
<div class="a t" style="left:338px;top:235.5px;font-size:11px;color:#555">A</div>
<svg style="left:345px;top:232px" width="7" height="5" viewBox="0 0 7 5"><path d="M0.5 0.5h6L3.5 4z" fill="#3C7DC4"/></svg>
<svg style="left:355px;top:231px" width="18" height="16" viewBox="0 0 18 16"><path d="M1.5 12.5L6 7.5L10 11L6 15z" fill="#E2B36F"/><path d="M7 7L11.5 2.5L15 6L10.5 10.5z" fill="#555"/><path d="M12 2l2-1.5l3 3l-1.5 2z" fill="#555"/></svg>
<div class="a t" style="left:177px;top:260px;font-size:13px;font-weight:bold;color:#444">Ж</div>
<div class="a t" style="left:200px;top:260px;font-size:13px;font-weight:bold;font-style:italic;color:#444">К</div>
<svg style="left:220px;top:261px" width="16" height="11" viewBox="0 0 16 11"><path d="M1 1h14M3 3.8h10M1 6.6h14M3 9.4h10" stroke="#555" stroke-width="1.1"/></svg>
<svg style="left:241px;top:258px" width="18" height="17" viewBox="0 0 18 17"><text x="0" y="7.5" font-family="Liberation Sans" font-size="8.5" fill="#555">ab</text><path d="M8 11.5L15.5 3" stroke="#555" stroke-width="2"/><rect x="1" y="13" width="16" height="3.6" fill="#F2E600"/></svg>
<svg style="left:263.5px;top:265.0px" width="6" height="4" viewBox="0 0 6 4"><path d="M0 0.5h6L3 3.5z" fill="#666"/></svg>
<div class="a t" style="left:278px;top:257px;font-size:14px;color:#444">A</div>
<div class="a" style="left:276px;top:271px;width:16px;height:3.6px;background:#E00000"></div>
<svg style="left:297.5px;top:265.0px" width="6" height="4" viewBox="0 0 6 4"><path d="M0 0.5h6L3 3.5z" fill="#666"/></svg>
<svg style="left:309px;top:257px" width="19" height="18" viewBox="0 0 19 18"><path d="M3 7.5L8 2.5L13 7.5L8 12.5z" fill="none" stroke="#666" stroke-width="1.1"/><path d="M8 2.5V0.5" stroke="#666" stroke-width="1"/><path d="M13 7.5c2 0.5 4 2 3.5 4c-0.5 1-1.5 1-2 0z" fill="#3C7DC4"/><rect x="1.5" y="14.5" width="16" height="3" fill="none" stroke="#777" stroke-width="1"/></svg>
<svg style="left:331.5px;top:265.0px" width="6" height="4" viewBox="0 0 6 4"><path d="M0 0.5h6L3 3.5z" fill="#666"/></svg>
<div class="a" style="left:341px;top:255px;width:22px;height:24px;background:#C8C8C8"></div>
<svg style="left:344px;top:259px" width="16" height="16" viewBox="0 0 16 16"><rect x="1" y="1" width="1" height="1" fill="#777"/><rect x="1" y="7" width="1" height="1" fill="#777"/><rect x="1" y="1" width="1" height="1" fill="#777"/><rect x="7" y="1" width="1" height="1" fill="#777"/><rect x="13" y="1" width="1" height="1" fill="#777"/><rect x="3" y="1" width="1" height="1" fill="#777"/><rect x="3" y="7" width="1" height="1" fill="#777"/><rect x="1" y="3" width="1" height="1" fill="#777"/><rect x="7" y="3" width="1" height="1" fill="#777"/><rect x="13" y="3" width="1" height="1" fill="#777"/><rect x="5" y="1" width="1" height="1" fill="#777"/><rect x="5" y="7" width="1" height="1" fill="#777"/><rect x="1" y="5" width="1" height="1" fill="#777"/><rect x="7" y="5" width="1" height="1" fill="#777"/><rect x="13" y="5" width="1" height="1" fill="#777"/><rect x="7" y="1" width="1" height="1" fill="#777"/><rect x="7" y="7" width="1" height="1" fill="#777"/><rect x="1" y="7" width="1" height="1" fill="#777"/><rect x="7" y="7" width="1" height="1" fill="#777"/><rect x="13" y="7" width="1" height="1" fill="#777"/><rect x="9" y="1" width="1" height="1" fill="#777"/><rect x="9" y="7" width="1" height="1" fill="#777"/><rect x="1" y="9" width="1" height="1" fill="#777"/><rect x="7" y="9" width="1" height="1" fill="#777"/><rect x="13" y="9" width="1" height="1" fill="#777"/><rect x="11" y="1" width="1" height="1" fill="#777"/><rect x="11" y="7" width="1" height="1" fill="#777"/><rect x="1" y="11" width="1" height="1" fill="#777"/><rect x="7" y="11" width="1" height="1" fill="#777"/><rect x="13" y="11" width="1" height="1" fill="#777"/><rect x="13" y="1" width="1" height="1" fill="#777"/><rect x="13" y="7" width="1" height="1" fill="#777"/><rect x="1" y="13" width="1" height="1" fill="#777"/><rect x="7" y="13" width="1" height="1" fill="#777"/><rect x="13" y="13" width="1" height="1" fill="#777"/><rect x="15" y="1" width="1" height="1" fill="#777"/><rect x="15" y="7" width="1" height="1" fill="#777"/><rect x="1" y="15" width="1" height="1" fill="#777"/><rect x="7" y="15" width="1" height="1" fill="#777"/><rect x="13" y="15" width="1" height="1" fill="#777"/><rect x="1" y="13.5" width="14" height="1.5" fill="#444"/></svg>
<svg style="left:365px;top:265.0px" width="6" height="4" viewBox="0 0 6 4"><path d="M0 0.5h6L3 3.5z" fill="#666"/></svg>
<div class="a" style="left:375.5px;top:227px;width:1px;height:53px;background:#DADADA"></div>
<svg style="left:388px;top:228px" width="24" height="24" viewBox="0 0 24 24"><rect x="2.5" y="13" width="20" height="4.5" fill="#C5D9F1"/><path d="M2.5 2.5h20v19h-20z" fill="none" stroke="#777" stroke-width="1.1"/><path d="M7.5 2.5v19M12.5 2.5v19M17.5 2.5v19M2.5 7.5h20M2.5 12.5h20M2.5 17.5h20" stroke="#888" stroke-width="1"/><rect x="9.5" y="15" width="6" height="8" fill="#fff"/><path d="M12.5 14.5v6" stroke="#3C7DC4" stroke-width="1.5"/><path d="M9.5 19l3 3.5l3-3.5z" fill="#3C7DC4"/></svg>
<svg style="left:413px;top:238.5px" width="6" height="4" viewBox="0 0 6 4"><path d="M0 0.5h6L3 3.5z" fill="#666"/></svg>
<div class="a t" style="left:380.5px;top:260.5px;font-size:11px;color:#555">Вставка</div>
<svg style="left:438px;top:228px" width="26" height="26" viewBox="0 0 26 26"><path d="M2.5 2.5h20v19h-20z" fill="none" stroke="#777" stroke-width="1.1"/><path d="M7.5 2.5v19M12.5 2.5v19M17.5 2.5v19M2.5 7.5h20M2.5 12.5h20M2.5 17.5h20" stroke="#888" stroke-width="1"/><path d="M12 14.5l9.5 9M21.5 14.5l-9.5 9" stroke="#D9573B" stroke-width="2.2" stroke-linecap="round"/></svg>
<svg style="left:464px;top:238.5px" width="6" height="4" viewBox="0 0 6 4"><path d="M0 0.5h6L3 3.5z" fill="#666"/></svg>
<div class="a t" style="left:430px;top:260.5px;font-size:11px;color:#555">Удалить</div>
<!-- context menu -->
<div class="a" style="left:169px;top:300px;width:215px;height:276.5px;background:#fff;border:1px solid #C6C6C6;box-shadow:1px 2px 4px rgba(0,0,0,0.2)"></div>
<div class="a t" style="left:202px;top:308.2px;font-size:11.4px;color:#444">В<u style="text-decoration:underline;text-underline-offset:1.5px">ы</u>резать</div>
<div class="a t" style="left:202px;top:332.8px;font-size:12px;color:#444"><u style="text-decoration:underline;text-underline-offset:1.5px">К</u>опировать</div>
<div class="a t" style="left:202px;top:411.0px;font-size:11.4px;color:#444"><u style="text-decoration:underline;text-underline-offset:1.5px">В</u>ставить</div>
<div class="a t" style="left:202px;top:435.2px;font-size:11.6px;color:#444"><u style="text-decoration:underline;text-underline-offset:1.5px">У</u>далить ячейки...</div>
<div class="a t" style="left:202px;top:459.2px;font-size:11.85px;color:#444">Об<u style="text-decoration:underline;text-underline-offset:1.5px">ъ</u>единить ячейки</div>
<div class="a t" style="left:202px;top:484.7px;font-size:11.95px;color:#444"><u style="text-decoration:underline;text-underline-offset:1.5px">С</u>тили оформления границ</div>
<div class="a t" style="left:202px;top:509.2px;font-size:11.55px;color:#444"><u style="text-decoration:underline;text-underline-offset:1.5px">Н</u>аправление текста...</div>
<div class="a t" style="left:202px;top:533.0px;font-size:11.7px;color:#444"><u style="text-decoration:underline;text-underline-offset:1.5px">С</u>войства таблицы...</div>
<div class="a t" style="left:202px;top:559.1px;font-size:11.8px;color:#444">Создать примеча<u style="text-decoration:underline;text-underline-offset:1.5px">н</u>ие</div>
<div class="a" style="left:195px;top:350px;width:187px;height:22px;background:#E6E6E6"></div>
<div class="a t" style="left:204.5px;top:355.5px;font-size:11.5px;font-weight:bold;color:#555">Параметры вставки:</div>
<div class="a" style="left:203px;top:402px;width:179px;height:1px;background:#E2E2E2"></div>
<div class="a" style="left:203px;top:476.5px;width:179px;height:1px;background:#E2E2E2"></div>
<div class="a" style="left:203px;top:550.5px;width:179px;height:1px;background:#E2E2E2"></div>
<svg style="left:368px;top:411px" width="6" height="9" viewBox="0 0 6 9"><path d="M1 0.5L5 4.5L1 8.5z" fill="#777"/></svg>
<svg style="left:368px;top:485px" width="6" height="9" viewBox="0 0 6 9"><path d="M1 0.5L5 4.5L1 8.5z" fill="#777"/></svg>
<div class="a" style="left:359px;top:481px;width:1px;height:16px;background:#D0D0D0"></div>
<svg style="left:175px;top:305px" width="17" height="17" viewBox="0 0 17 17"><path d="M3.5 1L10 11.5M13.5 1L7 11.5" stroke="#555" stroke-width="1.4"/><circle cx="4.8" cy="13.2" r="2.6" fill="none" stroke="#3C7DC4" stroke-width="1.3"/><circle cx="12.2" cy="13.2" r="2.6" fill="none" stroke="#3C7DC4" stroke-width="1.3"/></svg>
<svg style="left:174px;top:330px" width="17" height="16" viewBox="0 0 17 16"><path d="M1.5 1.5h5.5l2 2v7.5h-7.5z" fill="#fff" stroke="#555" stroke-width="1"/><path d="M3 5.5h4M3 7.5h3" stroke="#555" stroke-width="1"/><path d="M7.5 5.5h5l2.5 2.5v7.5h-7.5z" fill="#fff" stroke="#555" stroke-width="1"/><path d="M9 9.5h4.5M9 11.5h4.5M9 13.5h4.5" stroke="#3C7DC4" stroke-width="1"/></svg>
<svg style="left:175px;top:352px" width="17" height="18" viewBox="0 0 17 18"><rect x="1" y="3.2" width="12" height="13" rx="1" fill="#E8B96F"/><rect x="2.8" y="4.6" width="8.5" height="1" fill="#fff"/><path d="M3 4.7h8v-1q0-0.9-0.9-0.9h-1.6a1.5 1.5 0 0 0-3 0h-1.6q-0.9 0-0.9 0.9z" fill="#666"/><path d="M8 8.5h4.3l2.7 2.7v6.3h-7z" fill="#fff" stroke="#666" stroke-width="1"/><path d="M12.3 8.5v2.7h2.7" fill="none" stroke="#666" stroke-width="0.9"/></svg>
<svg style="left:200px;top:374px" width="24" height="26" viewBox="0 0 24 26"><rect x="1" y="4.4" width="17.7" height="18.6" rx="1.3" fill="#E8B96F"/><rect x="3.6" y="6.4" width="12.5" height="1.4" fill="#fff"/><path d="M4.2 6.6h11.5v-1.4q0-1.3-1.3-1.3h-2.4a2 2 0 0 0-4 0h-2.5q-1.3 0-1.3 1.3z" fill="#666"/><path d="M11.6 11.5h6.2l3.8 3.8v9.6h-10z" fill="#fff" stroke="#666" stroke-width="1.2"/><path d="M17.6 11.5v3.9h4" fill="none" stroke="#666" stroke-width="1"/></svg>
<svg style="left:175px;top:456px" width="15" height="17" viewBox="0 0 15 17"><rect x="1.5" y="1.5" width="13" height="14" fill="none" stroke="#555" stroke-width="1.1"/><path d="M8 1.5v5M8 10.5v5" stroke="#555" stroke-width="1.1"/><rect x="1.5" y="6.8" width="13" height="3.8" fill="#fff" stroke="#3C7DC4" stroke-width="1.1"/></svg>
<svg style="left:174px;top:505px" width="18" height="18" viewBox="0 0 18 18"><path d="M2.5 2v14M6.5 2v14M10.5 9.5v6.5M14.5 9.5v6.5" stroke="#555" stroke-width="1"/><path d="M0.8 14.5l1.7 2.5l1.7-2.5M4.8 14.5l1.7 2.5l1.7-2.5M8.8 14.5l1.7 2.5l1.7-2.5M12.8 14.5l1.7 2.5l1.7-2.5" fill="none" stroke="#555" stroke-width="1"/><path d="M9.5 8.5L12.3 1.5h1.2L16.3 8.5M10.6 6h4.6" fill="none" stroke="#3C7DC4" stroke-width="1.5"/></svg>
<svg style="left:174px;top:529px" width="18" height="18" viewBox="0 0 18 18"><rect x="1.5" y="1.5" width="12.5" height="11" fill="#fff" stroke="#666" stroke-width="1"/><rect x="1" y="1" width="13.5" height="2" fill="#555"/><path d="M1.5 6.5h7M1.5 9.5h7M5.5 3v9M10 3v4" stroke="#999" stroke-width="1"/><rect x="8.5" y="7.5" width="8.5" height="9" fill="#fff" stroke="#666" stroke-width="1"/><rect x="8" y="7" width="9.5" height="1.8" fill="#3C7DC4"/><path d="M10.5 11h1.5M13.5 11h1.5M10.5 14h1.5M13.5 14h1.5" stroke="#888" stroke-width="1.2"/></svg>
<svg style="left:174px;top:555px" width="18" height="17" viewBox="0 0 18 17"><path d="M7 2.5h8.5q0.8 0 0.8 0.8v7q0 0.8-0.8 0.8H9l-2.8 3.5v-3.5H3.3q-0.8 0-0.8-0.8V7" fill="none" stroke="#555" stroke-width="1"/><path d="M4 0.5v6.5M0.8 3.75h6.4" stroke="#3BA58C" stroke-width="2"/></svg>
<div class="a" style="left:160px;top:449px;width:162.5px;height:31px;border:3px solid #F03C3C;filter:drop-shadow(0.5px 2px 2px rgba(0,0,0,0.35))"></div>
<!-- ===== STATUS BAR ===== -->
<div class="a" style="left:1px;top:618px;width:889px;height:22px;background:#F1F1F1;border-top:1px solid #D5D5D5;border-bottom:1px solid #FAFAFA"></div>

<div class="a t" style="left:9.5px;top:623px;font-size:11.2px;color:#444">Страница 2 из 2</div>
<div class="a t" style="left:113px;top:623px;font-size:11.1px;color:#444">Число слов: 21</div>
<svg style="left:207px;top:621px" width="17" height="15" viewBox="0 0 17 15"><path d="M1.5 1.5h5.5v12H1.5zM7 1.5h4" fill="none" stroke="#555" stroke-width="1.1"/><path d="M7 1.5v12l2-1.5" fill="none" stroke="#555" stroke-width="1.1"/><path d="M9.5 8l2.5 3l4.5-7" fill="none" stroke="#555" stroke-width="1.2"/></svg>
<div class="a t" style="left:241.5px;top:623px;font-size:11.5px;color:#444">русский</div>
<svg style="left:598px;top:621px" width="16" height="15" viewBox="0 0 16 15"><path d="M1.5 2.5h5.5l1 1l1-1h5.5v10h-5.5l-1 1l-1-1h-5.5z" fill="none" stroke="#555" stroke-width="1.1"/><path d="M8 3.5v10M3 5h3M3 7h3M3 9h3M10 5h3M10 7h3M10 9h3" stroke="#555" stroke-width="0.9"/></svg>
<div class="a" style="left:625px;top:619px;width:38px;height:20px;background:#C8C8C8"></div>
<svg style="left:636px;top:622px" width="16" height="14" viewBox="0 0 16 14"><rect x="1.5" y="1.5" width="13" height="11" fill="none" stroke="#555" stroke-width="1.1"/><path d="M4 4.5h8M4 6.5h8M4 8.5h8M4 10.5h8" stroke="#555" stroke-width="0.9"/></svg>
<svg style="left:674px;top:621px" width="18" height="16" viewBox="0 0 18 16"><path d="M9 12.5H1.5v-11h11v5" fill="none" stroke="#555" stroke-width="1.1"/><path d="M4 4.5h6M4 6.5h6M4 8.5h4" stroke="#555" stroke-width="0.9"/><circle cx="12.5" cy="11.5" r="3.8" fill="#F1F1F1" stroke="#555" stroke-width="1.1"/><path d="M10 9.5c1.5 1 2 3 2 5M12 8c1 1.5 3 2 4.5 2" fill="none" stroke="#555" stroke-width="0.8"/></svg>
<div class="a" style="left:706px;top:628px;width:7px;height:2px;background:#555"></div>
<div class="a" style="left:716px;top:628.5px;width:100px;height:1px;background:#9A9A9A"></div>
<div class="a" style="left:764px;top:623px;width:4px;height:12px;background:#555"></div>
<div class="a" style="left:819px;top:628px;width:9px;height:2px;background:#555"></div>
<div class="a" style="left:822.5px;top:624.5px;width:2px;height:9px;background:#555"></div>
<div class="a t" style="left:844px;top:623px;font-size:11.3px;color:#444">100%</div>
<!-- watermark -->
<svg style="left:0;top:0" width="891" height="641" viewBox="0 0 891 641">
<rect x="22.5" y="562.5" width="65" height="51.5" rx="5" fill="none" stroke="#CFCFCF" stroke-width="1"/>
<rect x="26.5" y="566.5" width="57" height="44" rx="4" fill="none" stroke="#BFBFBF" stroke-width="3"/>
<rect x="28.8" y="568.8" width="52.4" height="39.4" rx="3" fill="none" stroke="#E0E0E0" stroke-width="0.8"/>
<path d="M55 594L38 577" stroke="#B2B2B2" stroke-width="3.4" stroke-linecap="round"/>
<path d="M31 571L45.5 576.5L37 585z" fill="#B2B2B2" stroke="#B2B2B2" stroke-width="1.5" stroke-linejoin="round"/>
<path d="M43.5 618.5v-2.5q0-1.5 1.5-1.5h17q1.5 0 1.5 1.5v2.5" fill="none" stroke="#C8C8C8" stroke-width="1"/>
<g fill="none" stroke-linecap="round" stroke-linejoin="round">
<g stroke="#D6D6D6" stroke-width="7.2">
<rect x="98.8" y="580.5" width="18.4" height="18.3" rx="5.5"/>
<path d="M146.3 580.5H131Q124.6 580.5 124.6 585.3Q124.6 589.7 131 589.7H140Q146.3 589.7 146.3 594.2Q146.3 598.8 140 598.8H124.6"/>
</g>
<g stroke="#F8BAC4" stroke-width="5.4">
<rect x="98.8" y="580.5" width="18.4" height="18.3" rx="5.5"/>
<path d="M146.3 580.5H131Q124.6 580.5 124.6 585.3Q124.6 589.7 131 589.7H140Q146.3 589.7 146.3 594.2Q146.3 598.8 140 598.8H124.6"/>
</g>
<g stroke="#CDCDCD" stroke-width="7.4">
<path d="M165 580.5V598.8M184.4 580.5V598.8M165 589.7H184.4"/>
<path d="M208.2 598.8H197Q191.8 598.8 191.8 593.5Q191.8 588.2 197 588.2H203Q208.2 588.2 208.2 591.8Q208.2 594 203 594H192"/>
<path d="M217.3 578V598.8"/>
<path d="M225.6 605.5V593.5Q225.6 588.2 231 588.2H238.5Q243.8 588.2 243.8 593.5Q243.8 598.8 238.5 598.8H226"/>
<path d="M266.6 598.8H256Q251.3 598.8 251.3 593.5Q251.3 588.2 256 588.2H261.5Q266.6 588.2 266.6 591.8Q266.6 594 261.5 594H252"/>
<path d="M273.8 598.8V593.5Q273.8 588.2 279 588.2H281.5"/>
</g>
<g stroke="#FFFFFF" stroke-width="5">
<path d="M165 580.5V598.8M184.4 580.5V598.8M165 589.7H184.4"/>
<path d="M208.2 598.8H197Q191.8 598.8 191.8 593.5Q191.8 588.2 197 588.2H203Q208.2 588.2 208.2 591.8Q208.2 594 203 594H192"/>
<path d="M217.3 578V598.8"/>
<path d="M225.6 605.5V593.5Q225.6 588.2 231 588.2H238.5Q243.8 588.2 243.8 593.5Q243.8 598.8 238.5 598.8H226"/>
<path d="M266.6 598.8H256Q251.3 598.8 251.3 593.5Q251.3 588.2 256 588.2H261.5Q266.6 588.2 266.6 591.8Q266.6 594 261.5 594H252"/>
<path d="M273.8 598.8V593.5Q273.8 588.2 279 588.2H281.5"/>
</g>
</g>
</svg>
<!-- overlays -->
<svg style="left:0;top:0" width="891" height="641" viewBox="0 0 891 641">
<defs>
<filter id="sh" x="-30%" y="-30%" width="160%" height="160%"><feGaussianBlur in="SourceAlpha" stdDeviation="2.5"/><feOffset dx="2" dy="3" result="b"/><feComponentTransfer><feFuncA type="linear" slope="0.45"/></feComponentTransfer><feMerge><feMergeNode/><feMergeNode in="SourceGraphic"/></feMerge></filter>
<filter id="sh2" x="-30%" y="-30%" width="160%" height="160%"><feGaussianBlur in="SourceAlpha" stdDeviation="2.5"/><feOffset dx="1.5" dy="3" result="b"/><feComponentTransfer><feFuncA type="linear" slope="0.5"/></feComponentTransfer><feMerge><feMergeNode/><feMergeNode in="SourceGraphic"/></feMerge></filter>
<clipPath id="mclip"><path d="M26 62.8H40.3C51 62.8 56.8 71 56.8 83V119C56.8 135 47 143.2 33 143.2C19 143.2 9.5 135 9.5 119V83C9.5 71 15 62.8 26 62.8z"/></clipPath>
</defs>
<!-- mouse -->
<g filter="url(#sh2)">
<path d="M26 62.8H40.3C51 62.8 56.8 71 56.8 83V119C56.8 135 47 143.2 33 143.2C19 143.2 9.5 135 9.5 119V83C9.5 71 15 62.8 26 62.8z" fill="#828286"/>
<g clip-path="url(#mclip)">
<path d="M0 60H33V100.5C22 100.5 14 98.5 0 95z" fill="#9A9A9E"/>
<path d="M33 60H60V95C52 98.5 44 100.5 33 100.5z" fill="#3CC3A5"/>
</g>
<path d="M26 62.8H40.3C51 62.8 56.8 71 56.8 83V119C56.8 135 47 143.2 33 143.2C19 143.2 9.5 135 9.5 119V83C9.5 71 15 62.8 26 62.8z" fill="none" stroke="#5A5A5E" stroke-width="2.3"/>
<rect x="30.5" y="72.5" width="4" height="13" rx="2" fill="#5C5C60"/>
</g>
<!-- arrow -->
<g filter="url(#sh)">
<path d="M46 79.5L113 265" stroke="#F44242" stroke-width="10" stroke-linecap="round"/>
<path d="M100.7 273.7L128.6 262.8L124.8 295.5z" fill="#F44242" stroke="#F44242" stroke-width="1" stroke-linejoin="round"/>
</g>
<!-- circles -->
<g filter="url(#sh)">
<circle cx="101.7" cy="98" r="34.7" fill="#0DAA8C"/>
<circle cx="61.3" cy="320.2" r="35" fill="#0DAA8C"/>
<circle cx="136.4" cy="463.4" r="34.8" fill="#0DAA8C"/>
</g>
<text x="101.5" y="117.3" text-anchor="middle" font-family="Liberation Sans" font-size="52" fill="#fff" stroke="#fff" stroke-width="0.7">2</text>
<path d="M61.8 302H67.1V339H61.8V310.8C59 312.7 56 314.5 52.9 316V311C57 308.7 59.8 306 61.8 302z" fill="#fff"/>
<text x="136.5" y="481.8" text-anchor="middle" font-family="Liberation Sans" font-size="52" fill="#fff" stroke="#fff" stroke-width="0.7">3</text>
</svg>
<!-- window border -->
<div class="a" style="left:0;top:0;width:1px;height:641px;background:#2B579A"></div>
<div class="a" style="left:890px;top:0;width:1px;height:641px;background:#2B579A"></div>
<div class="a" style="left:0;top:640px;width:891px;height:1px;background:#2B579A"></div>
</body></html>
